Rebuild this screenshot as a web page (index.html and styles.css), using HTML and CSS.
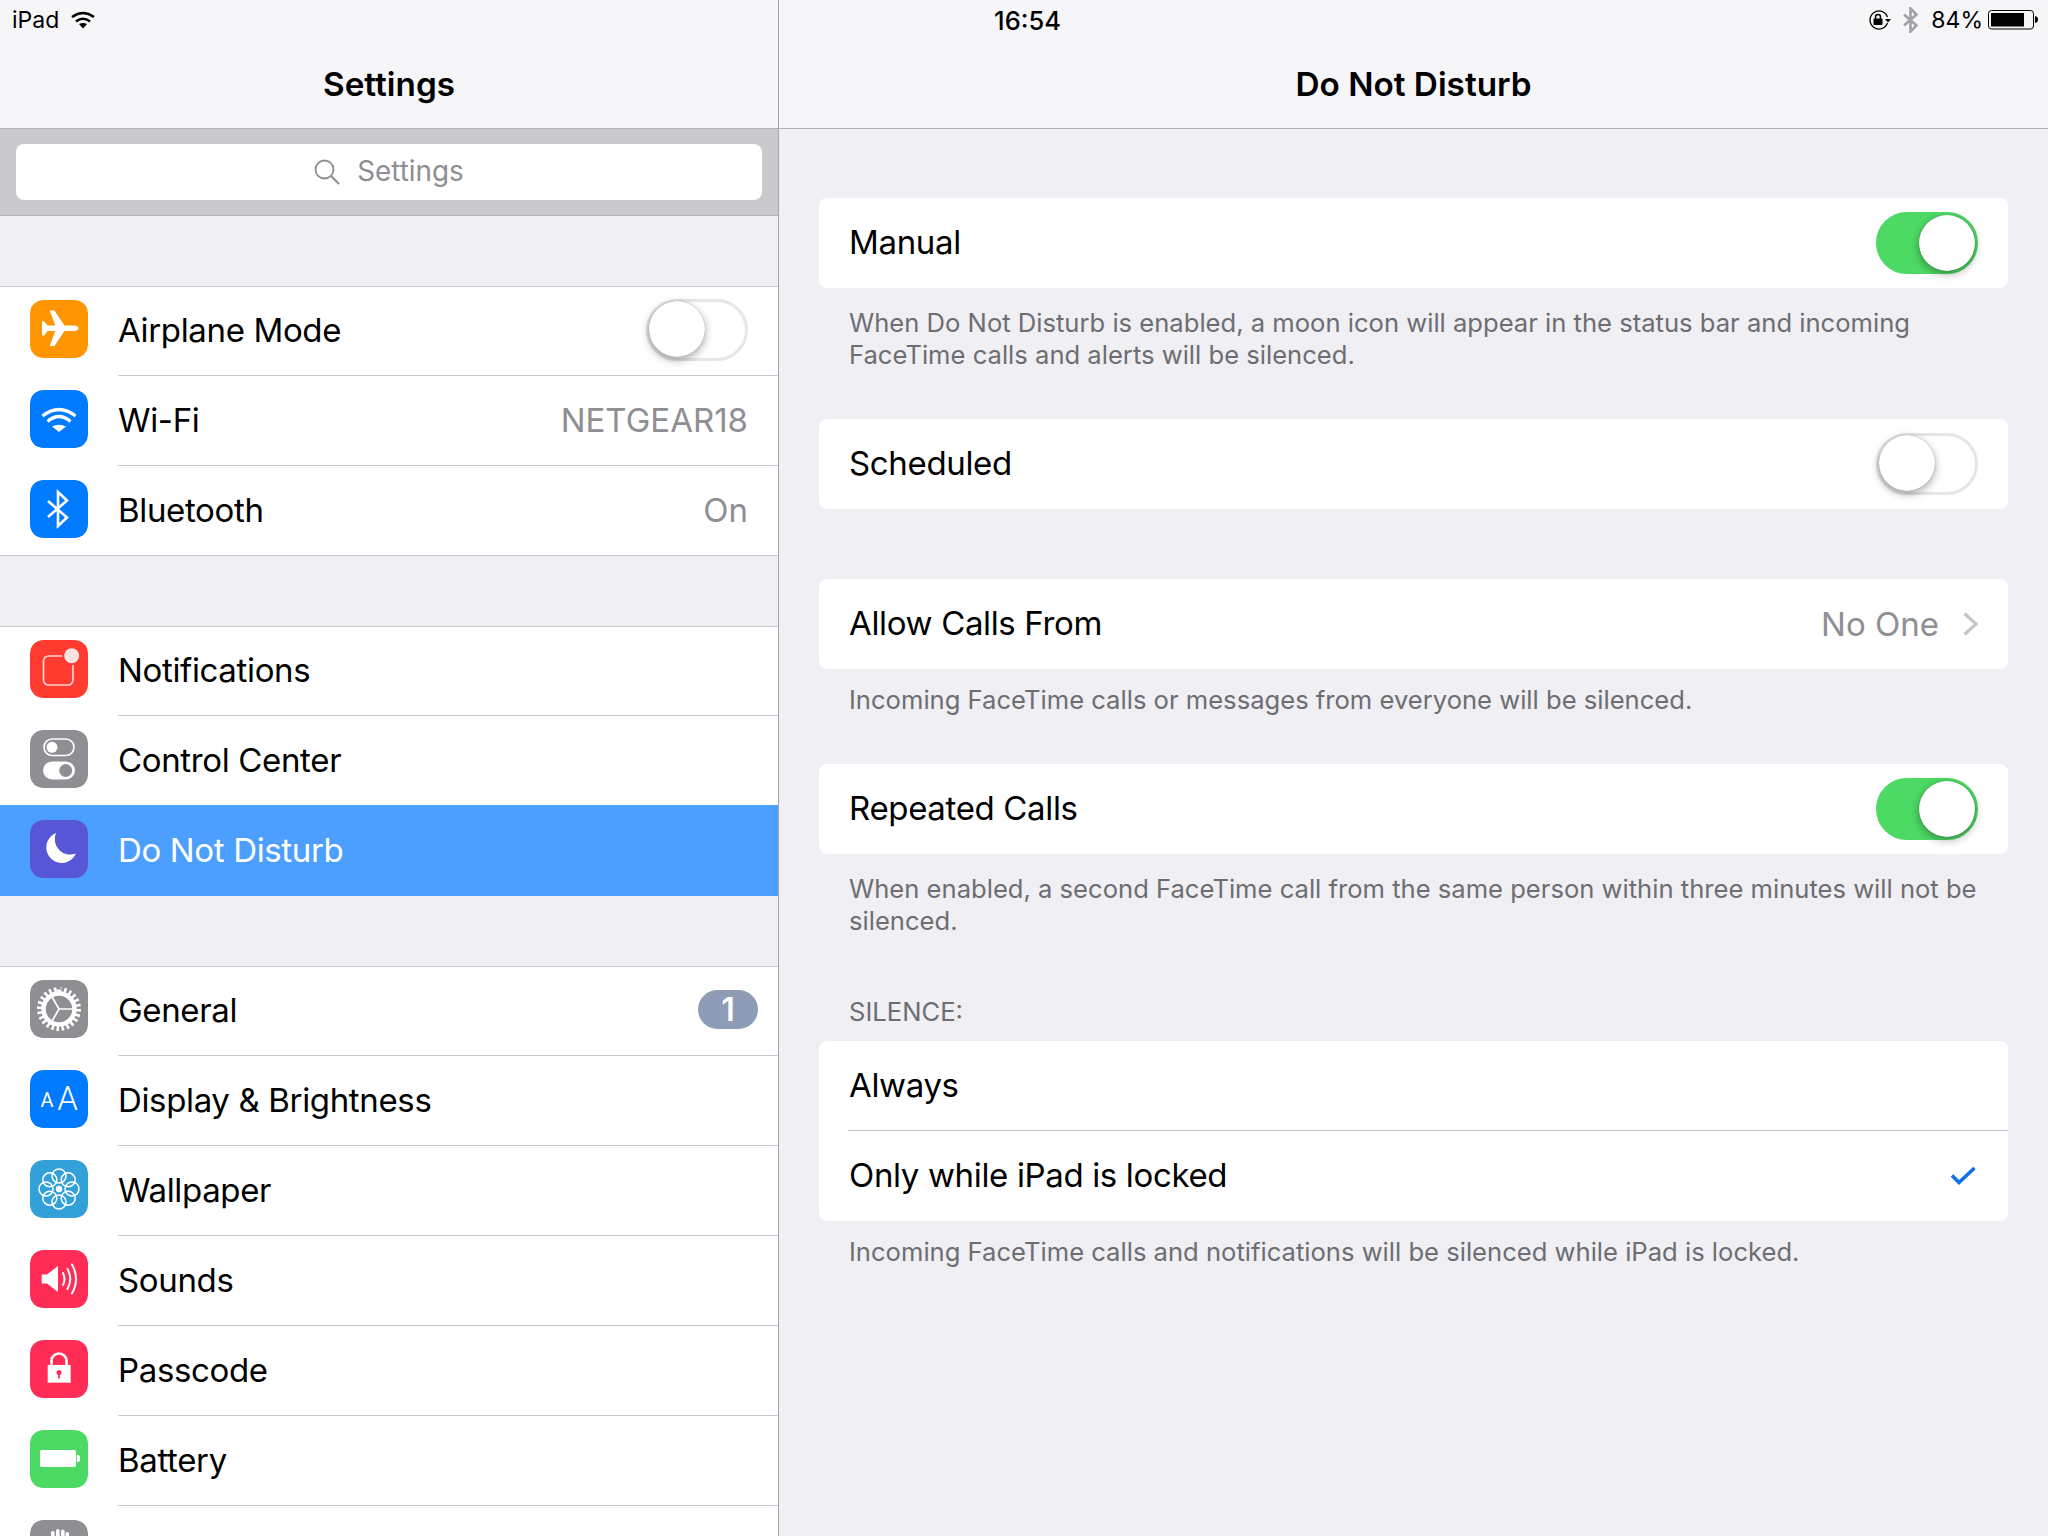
FILE: index.html
```html
<!DOCTYPE html>
<html lang="en">
<head>
<meta charset="utf-8">
<title>Settings - Do Not Disturb</title>
<link rel="stylesheet" href="styles.css">
</head>
<body>
<div class="status">
  <div class="status-side">
    <span class="carrier">iPad</span>
    <svg class="st-wifi" viewBox="0 0 24 18"><g fill="none" stroke="#000" stroke-width="2.6"><path d="M1 6 Q12 -2 23 6"/><path d="M5 10.500 Q12 5 19 10.500"/></g><path d="M8 13 Q12 11 16 13 L12 17.500z"/></svg>
  </div>
  <span class="clock">16:54</span>
  <div class="status-side status-right">
    <svg class="st-lock" viewBox="0 0 23 20"><path d="M19.500 7 A9 9 0 1 0 19.500 13" fill="none" stroke="#000" stroke-width="1.300"/><path d="M17 9h6l-3 3.500z"/><rect x="5.500" y="8.500" width="9" height="6.500" rx="1"/><path d="M7.500 9V7a2.500 2.500 0 0 1 5 0v2" fill="none" stroke="#000" stroke-width="1.500"/></svg>
    <svg class="st-bt" viewBox="0 0 15 26"><path d="M1 7.500 L13.500 18.500 L7.500 24.500 V1.500 L13.500 7.500 L1 18.500" fill="none" stroke="#a3a3a6" stroke-width="2.600"/></svg>
    <span class="pct">84%</span>
    <svg class="st-batt" viewBox="0 0 50 20"><rect x="0.500" y="0.500" width="45" height="18.500" rx="3" fill="none" stroke="#000"/><rect x="3" y="3" width="33" height="13.500"/><path d="M47 6 Q50 6.500 50 9.500 Q50 12.500 47 13z"/></svg>
  </div>
</div>

<div class="app">
  <aside class="master">
    <header class="nav"><h1 class="nav-title">Settings</h1></header>
    <div class="search-wrap">
      <div class="search">
        <svg class="search-ico" viewBox="0 0 26 26"><circle cx="10.500" cy="10.500" r="9" fill="none" stroke="#8e8e93" stroke-width="1.800"/><path d="M17 17 L25 25" stroke="#8e8e93" stroke-width="2.200"/></svg>
        <span>Settings</span>
      </div>
    </div>

    <section class="group">
      <div class="row">
        <svg class="ico" viewBox="0 0 58 58"><rect width="58" height="58" rx="13" fill="#ff9500"/><path d="M48.500 28.300c0-1.600-2.200-2.800-4.500-2.800H34.500L24.500 10.500h-4.800l5.500 15h-7.500l-3.500-4.300H12v14.200h2.200l3.500-4.300h7.500l-5.500 15h4.800l10-15H44c2.300 0 4.500-1.200 4.500-2.800z" fill="#fff"/></svg>
        <div class="row-body"><span class="label">Airplane Mode</span><span class="toggle"></span></div>
      </div>
      <div class="row">
        <svg class="ico" viewBox="0 0 58 58"><rect width="58" height="58" rx="13" fill="#007aff"/><g fill="none" stroke="#fff" stroke-width="3.200"><path d="M12.500 26 Q29 13 45.500 26"/><path d="M17.500 31.500 Q29 21.500 40.500 31.500"/></g><path d="M22 36.500 Q29 33 36 36.500 L29 42z" fill="#fff"/></svg>
        <div class="row-body"><span class="label">Wi-Fi</span><span class="value">NETGEAR18</span></div>
      </div>
      <div class="row row-last">
        <svg class="ico" viewBox="0 0 58 58"><rect width="58" height="58" rx="13" fill="#007aff"/><path d="M18 21 L37 37.500 L28 46 V12 L37 20.500 L18 37" fill="none" stroke="#fff" stroke-width="2.600"/></svg>
        <div class="row-body"><span class="label">Bluetooth</span><span class="value">On</span></div>
      </div>
    </section>

    <section class="group">
      <div class="row">
        <svg class="ico" viewBox="0 0 58 58"><rect width="58" height="58" rx="13" fill="#ff3b30"/><rect x="13.500" y="16" width="29.500" height="29" rx="5" fill="none" stroke="#fbd3d0" stroke-width="1.700"/><circle cx="41.700" cy="15.700" r="9.500" fill="#ff3b30"/><circle cx="41.700" cy="15.700" r="7.500" fill="#fbe3e2"/></svg>
        <div class="row-body"><span class="label">Notifications</span></div>
      </div>
      <div class="row row-last">
        <svg class="ico" viewBox="0 0 58 58"><rect width="58" height="58" rx="13" fill="#8e8e93"/><rect x="14" y="9" width="30" height="16.500" rx="8.250" fill="none" stroke="#fff" stroke-width="1.600"/><circle cx="22" cy="17.300" r="5.500" fill="#fff"/><rect x="13" y="31.500" width="32" height="18" rx="9" fill="#fff"/><circle cx="35.700" cy="40.500" r="6.500" fill="#8e8e93"/></svg>
        <div class="row-body"><span class="label">Control Center</span></div>
      </div>
      <div class="row row-selected">
        <svg class="ico" viewBox="0 0 58 58"><rect width="58" height="58" rx="13" fill="#5856d6"/><path d="M26 13 A15.500 15.500 0 1 0 46 33.500 A15.500 15.500 0 0 1 26 13z" fill="#fff"/></svg>
        <div class="row-body"><span class="label">Do Not Disturb</span></div>
      </div>
    </section>

    <section class="group">
      <div class="row">
        <svg class="ico" viewBox="0 0 58 58"><rect width="58" height="58" rx="13" fill="#8e8e93"/><g fill="none" stroke="#fff"><circle cx="29" cy="29" r="19.500" stroke-width="5" pathLength="48" stroke-dasharray="1 1"/><circle cx="29" cy="29" r="15.500" stroke-width="4.500"/><path d="M29 29H44M29 29L21.500 16M29 29L21.500 42" stroke-width="1.700"/></g></svg>
        <div class="row-body"><span class="label">General</span><span class="badge">1</span></div>
      </div>
      <div class="row">
        <svg class="ico" viewBox="0 0 58 58"><rect width="58" height="58" rx="13" fill="#007aff"/><text class="aa-small" x="17" y="37" text-anchor="middle">A</text><text class="aa-big" x="37.500" y="40" text-anchor="middle">A</text></svg>
        <div class="row-body"><span class="label">Display &amp; Brightness</span></div>
      </div>
      <div class="row">
        <svg class="ico" viewBox="0 0 58 58"><rect width="58" height="58" rx="13" fill="#34a0d8"/><g fill="none" stroke="#fff" stroke-width="1.500"><circle cx="29" cy="16" r="7"/><circle cx="29" cy="42" r="7"/><circle cx="16" cy="29" r="7"/><circle cx="42" cy="29" r="7"/><circle cx="19.800" cy="19.800" r="7"/><circle cx="38.200" cy="19.800" r="7"/><circle cx="19.800" cy="38.200" r="7"/><circle cx="38.200" cy="38.200" r="7"/></g><circle cx="29" cy="29" r="3.200" fill="#fff"/></svg>
        <div class="row-body"><span class="label">Wallpaper</span></div>
      </div>
      <div class="row">
        <svg class="ico" viewBox="0 0 58 58"><rect width="58" height="58" rx="13" fill="#ff2d55"/><path d="M11.700 24.500H17L28 16V42L17 33.500H11.700z" fill="#fff"/><g fill="none" stroke="#fff" stroke-width="2" stroke-linecap="round"><path d="M33 23 Q36 29 33 35"/><path d="M37.500 19 Q43 29 37.500 39"/><path d="M42 14.500 Q50 29 42 43.500"/></g></svg>
        <div class="row-body"><span class="label">Sounds</span></div>
      </div>
      <div class="row">
        <svg class="ico" viewBox="0 0 58 58"><rect width="58" height="58" rx="13" fill="#ff2d55"/><path d="M21.500 26v-5a7.500 7.500 0 0 1 15 0v5" fill="none" stroke="#fff" stroke-width="2.600"/><rect x="17.700" y="25" width="23" height="17.700" fill="#fff"/><circle cx="29" cy="32.500" r="2.500" fill="#ff2d55"/><rect x="28.200" y="33" width="1.700" height="5.500" fill="#ff2d55"/></svg>
        <div class="row-body"><span class="label">Passcode</span></div>
      </div>
      <div class="row">
        <svg class="ico" viewBox="0 0 58 58"><rect width="58" height="58" rx="13" fill="#4cd964"/><rect x="10" y="20" width="36" height="17" rx="1.500" fill="#fff"/><path d="M46.800 24.500 L50 26 V31 L46.800 32.500z" fill="#fff"/></svg>
        <div class="row-body"><span class="label">Battery</span></div>
      </div>
      <div class="row">
        <svg class="ico" viewBox="0 0 58 58"><rect width="58" height="58" rx="13" fill="#8e8e93"/><g fill="#fff"><rect x="21" y="11" width="3.600" height="22" rx="1.800"/><rect x="26" y="9" width="3.600" height="24" rx="1.800"/><rect x="31" y="9.500" width="3.600" height="24" rx="1.800"/><rect x="35.500" y="12" width="3.600" height="22" rx="1.800"/></g></svg>
        <div class="row-body"></div>
      </div>
    </section>
  </aside>

  <main class="detail">
    <header class="nav"><h1 class="nav-title">Do Not Disturb</h1></header>
    <div class="detail-body">
      <div class="card"><div class="cell"><span class="label">Manual</span><span class="toggle toggle-on"></span></div></div>
      <p class="note note-first">When Do Not Disturb is enabled, a moon icon will appear in the status bar and incoming FaceTime calls and alerts will be silenced.</p>
      <div class="card card-scheduled"><div class="cell"><span class="label">Scheduled</span><span class="toggle"></span></div></div>
      <div class="card card-calls"><div class="cell"><span class="label">Allow Calls From</span><span class="cell-right"><span class="value">No One</span><svg class="chev" viewBox="0 0 15 24"><path d="M1.500 1.500 L13 12 L1.500 22.500" fill="none" stroke="#c7c7cc" stroke-width="3.400"/></svg></span></div></div>
      <p class="note note-calls">Incoming FaceTime calls or messages from everyone will be silenced.</p>
      <div class="card"><div class="cell"><span class="label">Repeated Calls</span><span class="toggle toggle-on"></span></div></div>
      <p class="note note-repeat">When enabled, a second FaceTime call from the same person within three minutes will not be silenced.</p>
      <h2 class="section-head">SILENCE:</h2>
      <div class="card">
        <div class="cell cell-sep"><span class="label">Always</span></div>
        <div class="cell"><span class="label">Only while iPad is locked</span><svg class="check" viewBox="0 0 26 22"><path d="M2 10.500 L9 17.500 L24.500 3" fill="none" stroke="#0a72e6" stroke-width="3.600"/></svg></div>
      </div>
      <p class="note note-last">Incoming FaceTime calls and notifications will be silenced while iPad is locked.</p>
    </div>
  </main>
</div>
</body>
</html>
```
FILE: styles.css
```css
* { box-sizing: border-box; }
html, body { margin: 0; height: 1536px; overflow: hidden; }
body { font-family: Inter, "Liberation Sans", sans-serif; color: #000; background: #efeff4; position: relative; }

.status { position: absolute; top: 0; left: 0; right: 0; height: 40px; display: grid; grid-template-columns: 1fr auto 1fr; align-items: center; padding: 0 10px 0 12px; font-size: 23px; z-index: 2; }
.status-side { display: flex; align-items: center; }
.status-right { justify-content: flex-end; }
.carrier { margin-right: 14px; }
.st-wifi { width: 24px; height: 18px; margin-left: -2px; }
.clock { font-weight: 500; font-size: 25.5px; margin-left: 5px; }
.st-lock { width: 23px; height: 20px; margin-right: 12px; }
.st-bt { width: 15px; height: 26px; margin-right: 13px; }
.pct { margin-right: 5px; }
.st-batt { width: 50px; height: 20px; }

.app { display: grid; grid-template-columns: 779px 1fr; height: 1536px; }
.master { border-right: 1px solid #a3a3a9; overflow: hidden; }
.nav { height: 129px; background: #f6f6f8; border-bottom: 1px solid #b2b2b6; display: flex; justify-content: center; padding-top: 60px; }
.nav-title { margin: 0; font-size: 33.3px; font-weight: 600; line-height: 48px; }

.search-wrap { height: 87px; background: #c9c9ce; border-bottom: 1px solid #b2b2b6; padding: 15px 16px 0; }
.search { height: 56px; background: #fff; border-radius: 8px; display: flex; align-items: center; justify-content: center; gap: 17px; color: #8e8e93; font-size: 27.8px; padding-bottom: 2px; }
.search-ico { width: 26px; height: 26px; margin-top: 2px; }

.group { margin-top: 70px; background: #fff; box-shadow: inset 0 1px 0 #c8c7cc, inset 0 -1px 0 #c8c7cc; }
.row { height: 90px; display: flex; align-items: center; padding: 0 0 4px 30px; position: relative; }
.ico { width: 58px; height: 58px; flex: none; border-radius: 13px; }
.row-body { position: absolute; left: 118px; right: 0; top: 0; bottom: 0; border-bottom: 1px solid #c8c7cc; display: flex; align-items: center; justify-content: space-between; padding: 0 30px 2px 0; }
.row-last .row-body { border-bottom: 0; }
.group > .row:last-child .row-body { border-bottom: 0; }
.row-selected { background: #4c9ffe; box-shadow: 0 -1px 0 #4c9ffe; color: #fff; }
.label { font-size: 33px; line-height: 40px; letter-spacing: -0.35px; }
.value { font-size: 33px; line-height: 40px; color: #8e8e93; }
.badge { width: 60px; height: 39px; border-radius: 20px; margin-right: -10px; background: #8e9cb6; color: #fff; font-size: 32px; font-weight: 600; display: flex; align-items: center; justify-content: center; }
.aa-small { font: 400 20px Roboto, sans-serif; fill: #fff; }
.aa-big { font: 300 33px Roboto, sans-serif; fill: #fff; }

.toggle { width: 102px; height: 62px; border-radius: 31px; border: 3px solid #e5e5ea; background: #fff; position: relative; flex: none; }
.toggle::after { content: ""; position: absolute; left: 0; top: -1px; width: 56px; height: 56px; border-radius: 50%; background: #fff; box-shadow: 0 3px 8px rgba(0,0,0,.35), 0 0 1px rgba(0,0,0,.4); }
.toggle-on { background: #4cd964; border-color: #4cd964; }
.toggle-on::after { left: auto; right: 0; top: 0; }

.detail-body { padding: 69px 40px 0; }
.card { background: #fff; border-radius: 8px; }
.cell { height: 90px; display: flex; align-items: center; justify-content: space-between; padding: 0 30px 0 30px; }
.cell .label { margin-bottom: 2px; }
.cell-sep { position: relative; }
.cell-sep::after { content: ""; position: absolute; left: 29px; right: 0; bottom: 0; height: 1px; background: #c8c7cc; }
.cell-right { display: flex; align-items: center; gap: 24px; }
.chev { width: 15px; height: 24px; }
.check { width: 26px; height: 22px; margin-right: 2px; }
.note { margin: 0; padding: 0 30px; font-size: 25.6px; line-height: 32px; color: #6d6d72; }
.note-first { padding-top: 19px; height: 131px; }
.card-calls { margin-top: 70px; }
.note-calls { padding-top: 15px; height: 95px; }
.note-repeat { padding-top: 19px; height: 142px; }
.note-last { padding-top: 15px; }
.section-head { margin: 0; padding: 0 30px; height: 45px; font-size: 25.6px; font-weight: 400; line-height: 32px; color: #6d6d72; }
```
